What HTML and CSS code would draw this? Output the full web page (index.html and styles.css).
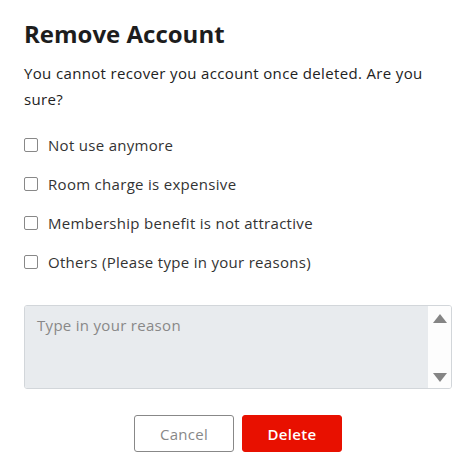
FILE: index.html
```html
<!DOCTYPE html>
<html>
<head>
<meta charset="utf-8">
<link rel="stylesheet" href="styles.css">
</head>
<body>
<div class="dialog">
  <h1 class="title">Remove Account</h1>
  <p class="desc">You cannot recover you account once deleted. Are you sure?</p>
  <ul class="options">
    <li class="option"><span class="box"></span><span>Not use anymore</span></li>
    <li class="option"><span class="box"></span><span>Room charge is expensive</span></li>
    <li class="option"><span class="box"></span><span>Membership benefit is not attractive</span></li>
    <li class="option"><span class="box"></span><span>Others (Please type in your reasons)</span></li>
  </ul>
  <div class="reason">
    <textarea class="reason-input" placeholder="Type in your reason"></textarea>
    <div class="scrollbar">
      <span class="arrow up"></span>
      <span class="arrow down"></span>
    </div>
  </div>
  <div class="actions">
    <button class="btn cancel">Cancel</button>
    <button class="btn delete">Delete</button>
  </div>
</div>
</body>
</html>
```
FILE: styles.css
```css
html, body {
  margin: 0;
  padding: 0;
  background: #fff;
}
.dialog {
  font-family: "Open Sans", "Noto Sans", sans-serif;
  color: #222;
  padding: 17px 16px 0 24px;
  width: 428px;
}
.title {
  margin: 0;
  font-size: 24px;
  line-height: 34px;
  font-weight: 700;
  color: #1d1d1d;
}
.desc {
  margin: 9px 0 0;
  font-size: 15px;
  line-height: 26px;
  letter-spacing: 0.35px;
  color: #222;
}
.options {
  list-style: none;
  margin: 23px 0 0;
  padding: 0;
  display: flex;
  flex-direction: column;
  gap: 19px;
}
.option {
  display: flex;
  align-items: center;
  gap: 10px;
  font-size: 15px;
  line-height: 20px;
  letter-spacing: 0.3px;
  color: #333;
}
.box {
  width: 12px;
  height: 12px;
  border: 1.5px solid #888;
  border-radius: 2px;
  flex: none;
}
.reason {
  margin-top: 33px;
  height: 82px;
  border: 1px solid #d2d6da;
  border-radius: 3px;
  display: flex;
  overflow: hidden;
}
.reason-input {
  flex: 1;
  border: none;
  background: #e8ebee;
  resize: none;
  padding: 9px 12px;
  font-family: "Open Sans", "Noto Sans", sans-serif;
  font-size: 15px;
  line-height: 20px;
  letter-spacing: 0.3px;
  outline: none;
}
.reason-input::placeholder {
  color: #888;
}
.scrollbar {
  width: 23px;
  background: #fdfdfd;
  display: flex;
  flex-direction: column;
  justify-content: space-between;
  align-items: center;
  padding: 8px 0 6px;
}
.arrow {
  width: 0;
  height: 0;
  border-left: 7px solid transparent;
  border-right: 7px solid transparent;
}
.arrow.up {
  border-bottom: 9px solid #858585;
}
.arrow.down {
  border-top: 9px solid #858585;
}
.actions {
  display: flex;
  justify-content: center;
  gap: 8px;
  margin-top: 26px;
}
.btn {
  width: 100px;
  height: 37px;
  border-radius: 3px;
  font-family: "Open Sans", "Noto Sans", sans-serif;
  font-size: 15px;
  letter-spacing: 0.3px;
  cursor: pointer;
}
.cancel {
  background: #fff;
  border: 1px solid #888;
  color: #888;
}
.delete {
  background: #e81000;
  border: 1px solid #e81000;
  color: #fff;
  font-weight: 600;
}
```
